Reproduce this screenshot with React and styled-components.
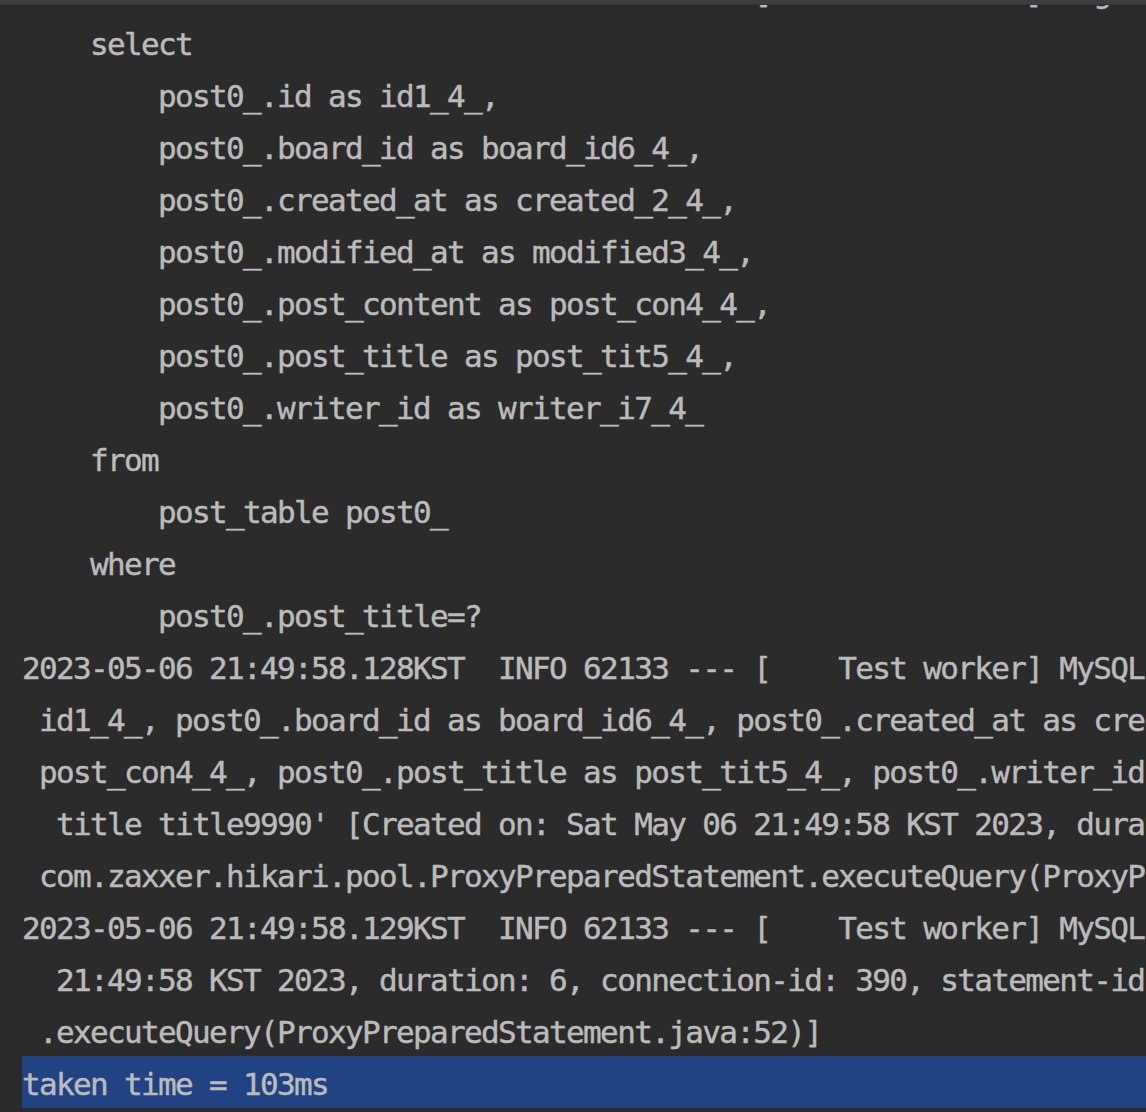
import React from "react";
import styled, { createGlobalStyle } from "styled-components";

const GlobalStyle = createGlobalStyle`
  html, body {
    margin: 0;
    padding: 0;
    background: #2b2b2b;
    overflow: hidden;
  }
`;

const Panel = styled.div`
  display: flex;
  flex-direction: column;
  width: 100vw;
  height: 100vh;
  background: #2b2b2b;
`;

const TopBorder = styled.div`
  flex: none;
  height: 4px;
  background: #3c3f41;
  border-bottom: 1px solid #323437;
`;

const Viewport = styled.div`
  flex: 1;
  overflow: hidden;
  padding-left: 22px;
`;

const Scroller = styled.div`
  margin-top: -41px;
  display: flex;
  flex-direction: column;
`;

const Line = styled.div`
  box-sizing: border-box;
  height: 52px;
  padding-top: 4px;
  line-height: 48px;
  white-space: pre;
  font-family: "DejaVu Sans Mono", "Liberation Mono", monospace;
  font-size: 31px;
  letter-spacing: -1.66px;
  color: #bbbbbb;
  -webkit-text-stroke: 0.45px #bbbbbb;
  background: ${(p) => (p.$selected ? "#214283" : "transparent")};
`;

const lines = [
  "2023-05-06 21:49:58.126KST DEBUG 62133 --- [    Test worker] org.hibernate.SQL                        : ",
  "    select",
  "        post0_.id as id1_4_,",
  "        post0_.board_id as board_id6_4_,",
  "        post0_.created_at as created_2_4_,",
  "        post0_.modified_at as modified3_4_,",
  "        post0_.post_content as post_con4_4_,",
  "        post0_.post_title as post_tit5_4_,",
  "        post0_.writer_id as writer_i7_4_ ",
  "    from",
  "        post_table post0_ ",
  "    where",
  "        post0_.post_title=?",
  "2023-05-06 21:49:58.128KST  INFO 62133 --- [    Test worker] MySQL                                    : select post0_.id as",
  " id1_4_, post0_.board_id as board_id6_4_, post0_.created_at as created_2_4_, post0_.modified_at as modified3_4_, post0_.post_content as",
  " post_con4_4_, post0_.post_title as post_tit5_4_, post0_.writer_id as writer_i7_4_ from post_table post0_ where post0_.post_title='post",
  "  title title9990' [Created on: Sat May 06 21:49:58 KST 2023, duration: 6, connection-id: 390, statement-id: 0, resultset-id: 0,\tat",
  " com.zaxxer.hikari.pool.ProxyPreparedStatement.executeQuery(ProxyPreparedStatement.java:52)]",
  "2023-05-06 21:49:58.129KST  INFO 62133 --- [    Test worker] MySQL                                    : [QUERY] select post0_.id",
  "  21:49:58 KST 2023, duration: 6, connection-id: 390, statement-id: 0, resultset-id: 0,\tat com.zaxxer.hikari.pool.ProxyPreparedStatement",
  " .executeQuery(ProxyPreparedStatement.java:52)]",
];

export default function App() {
  return (
    <>
      <GlobalStyle />
      <Panel>
        <TopBorder />
        <Viewport>
          <Scroller>
            {lines.map((text, i) => (
              <Line key={i}>{text}</Line>
            ))}
            <Line $selected>taken time = 103ms</Line>
          </Scroller>
        </Viewport>
      </Panel>
    </>
  );
}
